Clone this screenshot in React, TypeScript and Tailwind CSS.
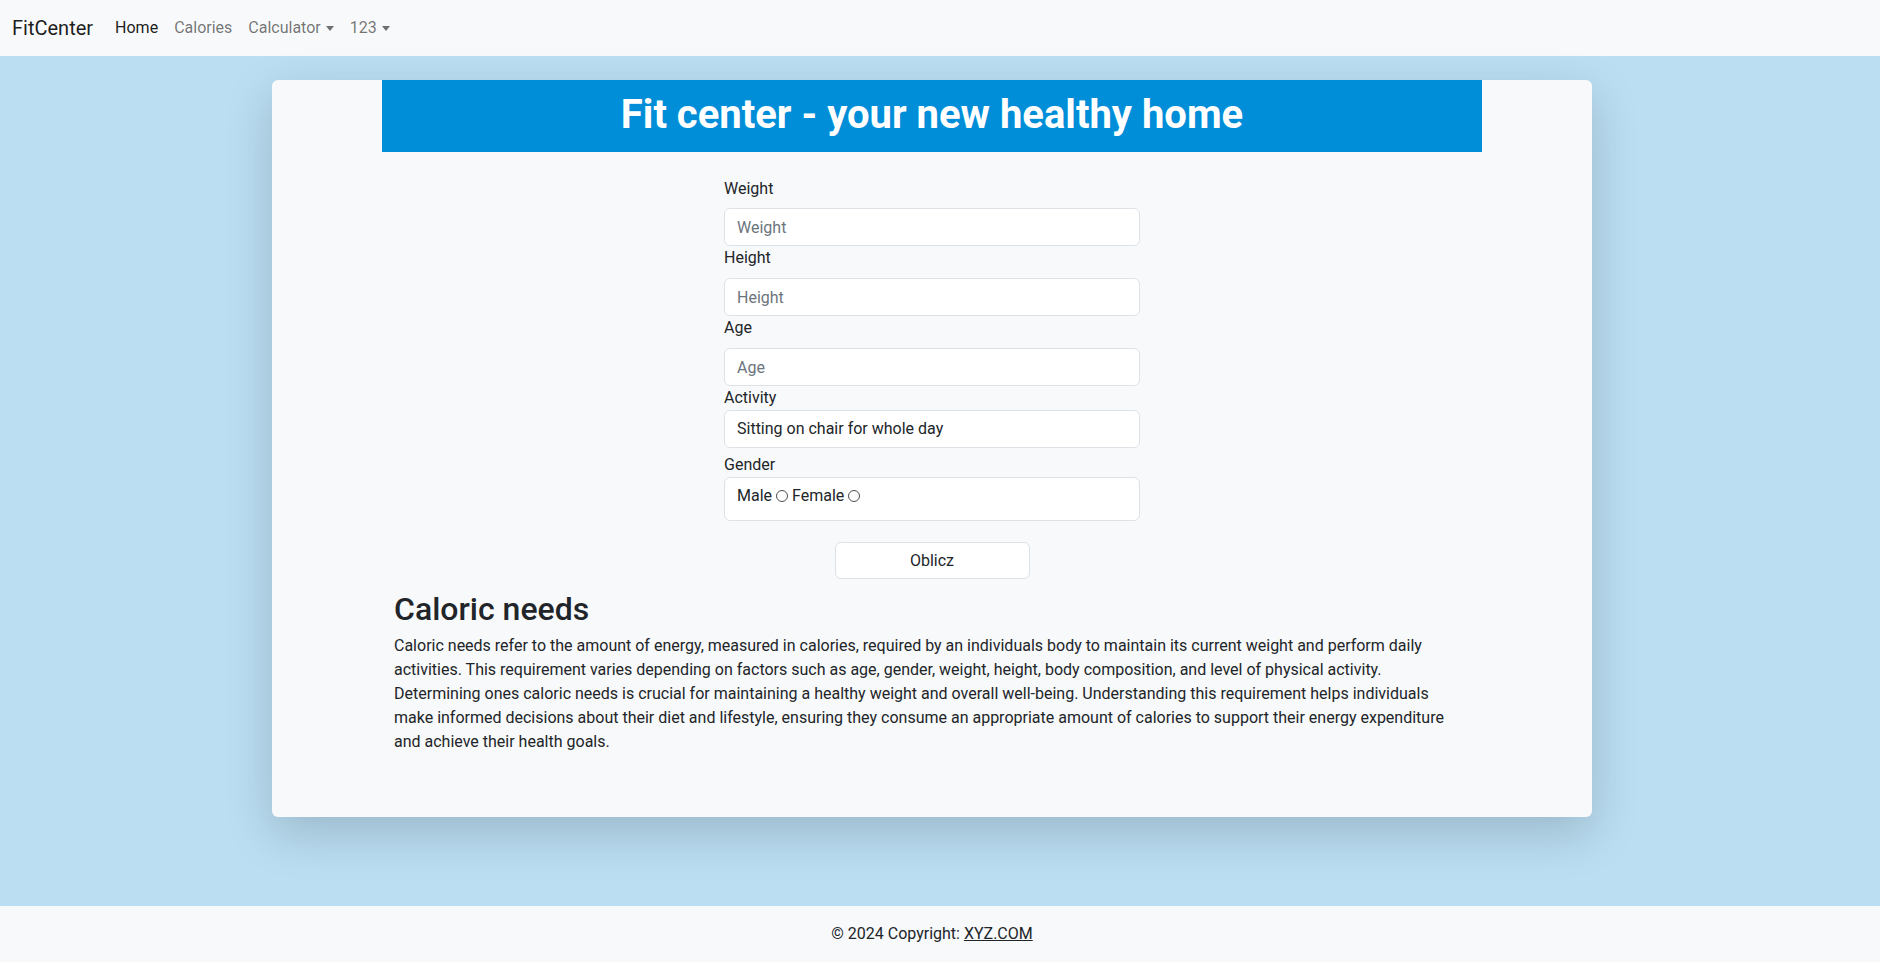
import React from "react";

function Caret() {
  return (
    <span className="ml-[5px] inline-block h-0 w-0 border-x-[4px] border-t-[5px] border-x-transparent border-t-current" />
  );
}

function Radio() {
  return (
    <span className="mx-[4px] mt-[6px] inline-block h-[12px] w-[12px] shrink-0 rounded-full border border-[#4d4d4d] bg-white" />
  );
}

const lines = [
  "Caloric needs refer to the amount of energy, measured in calories, required by an individuals body to maintain its current weight and perform daily",
  "activities. This requirement varies depending on factors such as age, gender, weight, height, body composition, and level of physical activity.",
  "Determining ones caloric needs is crucial for maintaining a healthy weight and overall well-being. Understanding this requirement helps individuals",
  "make informed decisions about their diet and lifestyle, ensuring they consume an appropriate amount of calories to support their energy expenditure",
  "and achieve their health goals.",
];

const inputCls =
  "block h-[38px] w-full rounded-[6px] border border-[#dee2e6] bg-white px-3 text-base placeholder:text-[#6c757d] focus:outline-none";

export default function App() {
  return (
    <div className="flex h-screen flex-col bg-[#bbdef3] font-['Roboto','Liberation_Sans',sans-serif] text-[#212529]">
      <nav className="flex h-[56px] shrink-0 items-center bg-[#f8f9fa] px-3">
        <span className="mr-[14px] text-[20px] leading-[30px] text-black/90">FitCenter</span>
        <a className="px-2 text-base text-black/90">Home</a>
        <a className="px-2 text-base text-black/55">Calories</a>
        <a className="flex items-center px-2 text-base text-black/55">
          Calculator
          <Caret />
        </a>
        <a className="flex items-center px-2 text-base text-black/55">
          123
          <Caret />
        </a>
      </nav>

      <main className="flex-1 pr-[16px]">
        <div className="mx-auto mt-6 min-h-[737px] w-[1320px] rounded-[6px] bg-[#f8f9fa] shadow-[0_16px_48px_rgba(0,0,0,0.175)]">
          <div className="mx-auto flex h-[72px] w-[1100px] items-center justify-center bg-[#008ed9] pb-[2px] text-[40px] font-bold text-white">
            Fit center - your new healthy home
          </div>

          <div className="mx-auto w-[1100px] px-3">
            <form className="mx-auto mt-[25px] w-[416px]">
              <label className="mb-[7px] block leading-6">Weight</label>
              <input placeholder="Weight" className={inputCls} />
              <label className="mb-2 block leading-6">Height</label>
              <input placeholder="Height" className={inputCls} />
              <label className="mb-2 block leading-6">Age</label>
              <input placeholder="Age" className={inputCls} />
              <label className="block leading-6">Activity</label>
              <div className="flex h-[38px] w-full items-center rounded-[6px] border border-[#dee2e6] bg-white px-3 text-base">
                Sitting on chair for whole day
              </div>
              <label className="mt-[5px] block leading-6">Gender</label>
              <div className="flex h-[44px] w-full items-start rounded-[6px] border border-[#dee2e6] bg-white px-3 pt-[6px] leading-6">
                <span>Male</span>
                <Radio />
                <span>Female</span>
                <Radio />
              </div>
              <button
                type="button"
                className="mx-auto mt-[21px] block h-[37px] w-[195px] rounded-[6px] border border-[#dee2e6] bg-white text-base"
              >
                Oblicz
              </button>
            </form>

            <h2 className="mt-[11px] mb-[5px] text-[32px] leading-[38px] font-medium">Caloric needs</h2>
            <p className="mb-4 pt-[1px] text-base leading-6">
              {lines.map((l, i) => (
                <React.Fragment key={i}>
                  {l}
                  {i < lines.length - 1 && <br />}
                </React.Fragment>
              ))}
            </p>
          </div>
        </div>
      </main>

      <footer className="flex h-[56px] shrink-0 items-center justify-center bg-[#f8f9fa] pr-[16px] text-base">
        <span>
          © 2024 Copyright: <a className="text-[#212529] underline">XYZ.COM</a>
        </span>
      </footer>
    </div>
  );
}
